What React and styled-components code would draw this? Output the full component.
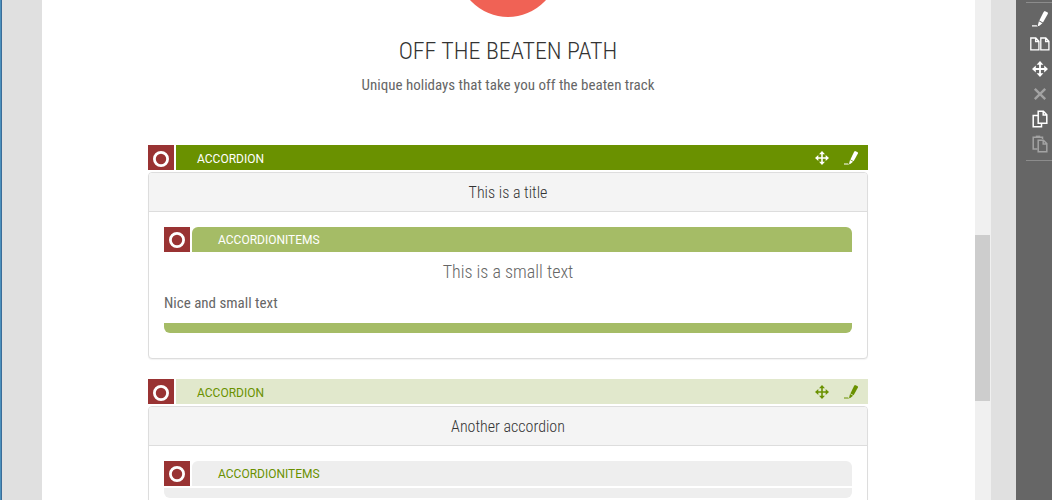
import React from "react";
import styled, { createGlobalStyle, css } from "styled-components";

const condensed = '"Roboto Condensed", "Liberation Sans Narrow", Roboto, sans-serif';

const GlobalStyle = createGlobalStyle`
  *, *::before, *::after { box-sizing: border-box; }
  body { margin: 0; background: #e0e0e0; color: #666; font: 400 15px/20px ${condensed}; }
  h1, h2, h3, p { margin: 0; }
`;

const Editor = styled.div`
  display: flex;
  height: 100vh;
  overflow: hidden;
  border-left: 1px solid #4c91bd;
  box-shadow: inset 1px 0 #3b6d99;
  padding-left: 41px;
`;

const Page = styled.main`
  flex: 1;
  min-width: 0;
  overflow: hidden;
  background: #fff;
  padding: 0 107px 0 106px;
`;

const ScrollTrack = styled.div`
  width: 16px;
  margin-right: 25px;
  background: #f0f0f0;
  padding-top: 235px;
`;

const ScrollThumb = styled.div`
  width: 15px;
  height: 166px;
  background: #cdcdcd;
`;

const Intro = styled.header`
  display: flex;
  flex-direction: column;
  align-items: center;
  text-align: center;
  margin-bottom: 50px;
`;

const Disc = styled.div`
  width: 102px;
  height: 102px;
  margin-top: -85px;
  border-radius: 50%;
  background: #f06255;
`;

const Heading = styled.h1`
  margin-top: 18px;
  font-size: 24px;
  line-height: 32px;
  font-weight: 300;
  color: #333;
  text-transform: uppercase;
`;

const Lead = styled.p`
  margin-top: 8px;
`;

const Section = styled.section`
  margin-bottom: 20px;
`;

const BarRow = styled.div`
  display: flex;
  gap: 2px;
  height: 25px;
`;

const Marker = styled.button`
  display: grid;
  place-items: center;
  width: 26px;
  height: 25px;
  padding: ${(p) => (p.$item ? 0 : 2)}px 0 0;
  border: 0;
  background: #993333;
`;

const tones = {
  active: css`background: #6a9100; color: #fff;`,
  idle: css`background: #e1e8cc; color: #6a9100;`,
  activeItem: css`background: #a5bc66; color: #fff;`,
  idleItem: css`background: #eee; color: #6a9100;`,
};

const Bar = styled.div`
  flex: 1;
  display: flex;
  align-items: center;
  padding: 0 9px 0 ${(p) => (p.$item ? 26 : 21)}px;
  border-radius: ${(p) => (p.$item ? "6px 6px 0 0" : "0")};
  font: 400 12px/20px Roboto, sans-serif;
  text-transform: uppercase;
  ${(p) => tones[p.$tone]}
`;

const BarLabel = styled.span`
  padding-top: ${(p) => (p.$item ? 0 : 2)}px;
`;

const BarActions = styled.div`
  display: flex;
  gap: 13px;
  margin-left: auto;
`;

const IconButton = styled.button`
  display: grid;
  place-items: center;
  width: 16px;
  height: 20px;
  padding: 0;
  border: 0;
  background: none;
  color: inherit;
`;

const Panel = styled.article`
  margin-top: 2px;
  border: 1px solid #ddd;
  border-radius: 4px;
  background: #fff;
  box-shadow: 0 1px 1px rgba(0, 0, 0, 0.05);
  overflow: hidden;
`;

const PanelTitle = styled.h2`
  padding: 10px 15px 8px;
  border-bottom: 1px solid #ddd;
  background: #f4f4f4;
  color: #333;
  font-size: 16px;
  line-height: 20px;
  font-weight: 300;
  text-align: center;
`;

const PanelBody = styled.div`
  padding: 15px 15px 25px;
`;

const ItemTitle = styled.h3`
  padding: 8px 0 9px;
  font-size: 18px;
  line-height: 24px;
  font-weight: 300;
  text-align: center;
`;

const ItemText = styled.p`
  margin-bottom: 10px;
`;

const EndBar = styled.div`
  height: 10px;
  margin-top: ${(p) => (p.$empty ? 2 : 0)}px;
  border-radius: 0 0 6px 6px;
  ${(p) => tones[p.$tone]}
`;

const Tools = styled.aside`
  width: 36px;
  background: #666;
  padding: 2px 0 0 10px;
`;

const ToolList = styled.div`
  display: flex;
  flex-direction: column;
  border: solid #8c8c8c;
  border-width: 1px 0;
  padding: 3px 0 4px 4px;
`;

const Tool = styled.button`
  display: grid;
  place-items: center;
  width: 20px;
  height: 25px;
  padding: 0;
  border: 0;
  background: none;
  color: #fff;
  &:disabled { color: #a3a3a3; }
`;

const Ring = () => (
  <svg width="16" height="16" viewBox="0 0 16 16" fill="none" stroke="#fff" strokeWidth="2.8">
    <circle cx="8" cy="8" r="6.6" />
  </svg>
);

const Move = ({ size = 14 }) => (
  <svg width={size} height={size} viewBox="0 0 16 16" fill="currentColor">
    <path d="M8 0l3.4 3.8H8.9v3.3h3.3V4.6L16 8l-3.8 3.4V8.9H8.9v3.3h2.5L8 16l-3.4-3.8h2.5V8.9H3.8v2.5L0 8l3.8-3.4v2.5h3.3V3.8H4.6z" />
  </svg>
);

const Pencil = ({ size = 14 }) => (
  <svg width={size} height={size} viewBox="0 0 16 16" fill="currentColor">
    <path d="M11.6.9L12.6 0l3.2 1.5.1 1.3-4.9 8.8-3.7-2z" />
    <path d="M6.9 10.3l3.5 1.9-3.3 2.7-1.1.1-.1-1z" />
    <path d="M0 14.2h4.6l1.3 1.3H0z" />
  </svg>
);

const Pages = () => (
  <svg width="20" height="14" viewBox="0 0 20 14" fill="none" stroke="currentColor" strokeWidth="1.3">
    <path d="M.8 1h5l3.1 3.3v8.5H.8zM5.6 1v3.5h3.3M10.8 1h5l3.1 3.3v8.5h-8.1zM15.6 1v3.5h3.3" />
  </svg>
);

const Cross = () => (
  <svg width="14" height="14" viewBox="0 0 14 14" fill="none" stroke="currentColor" strokeWidth="2.4">
    <path d="M1.8 1.8l10.4 10.4M12.2 1.8L1.8 12.2" />
  </svg>
);

const Copy = () => (
  <svg width="16" height="18" viewBox="0 0 16 18" fill="none" stroke="currentColor" strokeWidth="1.5">
    <path d="M6 5.5H1.2v11.3h8.3v-3.5" />
    <path d="M6.2 1.2h5.2l3.4 3.5v8.5H6.2zM11.2 1.2V5h3.6" />
  </svg>
);

const Paste = () => (
  <svg width="16" height="18" viewBox="0 0 16 18" fill="none" stroke="currentColor" strokeWidth="1.5">
    <path d="M5.5 14H1.2V2.2h9.3V4" />
    <path d="M3.8 1.8h4.4" strokeWidth="2.4" />
    <path d="M6.2 5.2h5.2l3.4 3.4v8.2H6.2zM11.2 5.2V9h3.6" />
  </svg>
);

function Accordion({ title, active, children }) {
  const itemTone = active ? "activeItem" : "idleItem";
  return (
    <Section>
      <BarRow>
        <Marker aria-label="Select accordion"><Ring /></Marker>
        <Bar $tone={active ? "active" : "idle"}>
          <BarLabel>Accordion</BarLabel>
          <BarActions>
            <IconButton aria-label="Move accordion"><Move /></IconButton>
            <IconButton aria-label="Edit accordion"><Pencil /></IconButton>
          </BarActions>
        </Bar>
      </BarRow>
      <Panel>
        <PanelTitle>{title}</PanelTitle>
        <PanelBody>
          <BarRow>
            <Marker $item aria-label="Select accordion items"><Ring /></Marker>
            <Bar $item $tone={itemTone}>
              <BarLabel $item>AccordionItems</BarLabel>
            </Bar>
          </BarRow>
          {children}
          <EndBar $tone={itemTone} $empty={!children} />
        </PanelBody>
      </Panel>
    </Section>
  );
}

const tools = [
  { label: "Edit", icon: <Pencil size={16} /> },
  { label: "Pages", icon: <Pages /> },
  { label: "Move", icon: <Move size={16} /> },
  { label: "Delete", icon: <Cross />, disabled: true },
  { label: "Copy", icon: <Copy /> },
  { label: "Paste", icon: <Paste />, disabled: true },
];

export default function App() {
  return (
    <>
      <GlobalStyle />
      <Editor>
        <Page>
          <Intro>
            <Disc />
            <Heading>Off the beaten path</Heading>
            <Lead>Unique holidays that take you off the beaten track</Lead>
          </Intro>
          <Accordion title="This is a title" active>
            <ItemTitle>This is a small text</ItemTitle>
            <ItemText>Nice and small text</ItemText>
          </Accordion>
          <Accordion title="Another accordion" />
        </Page>
        <ScrollTrack><ScrollThumb /></ScrollTrack>
        <Tools>
          <ToolList>
            {tools.map((t) => (
              <Tool key={t.label} aria-label={t.label} disabled={t.disabled}>{t.icon}</Tool>
            ))}
          </ToolList>
        </Tools>
      </Editor>
    </>
  );
}
